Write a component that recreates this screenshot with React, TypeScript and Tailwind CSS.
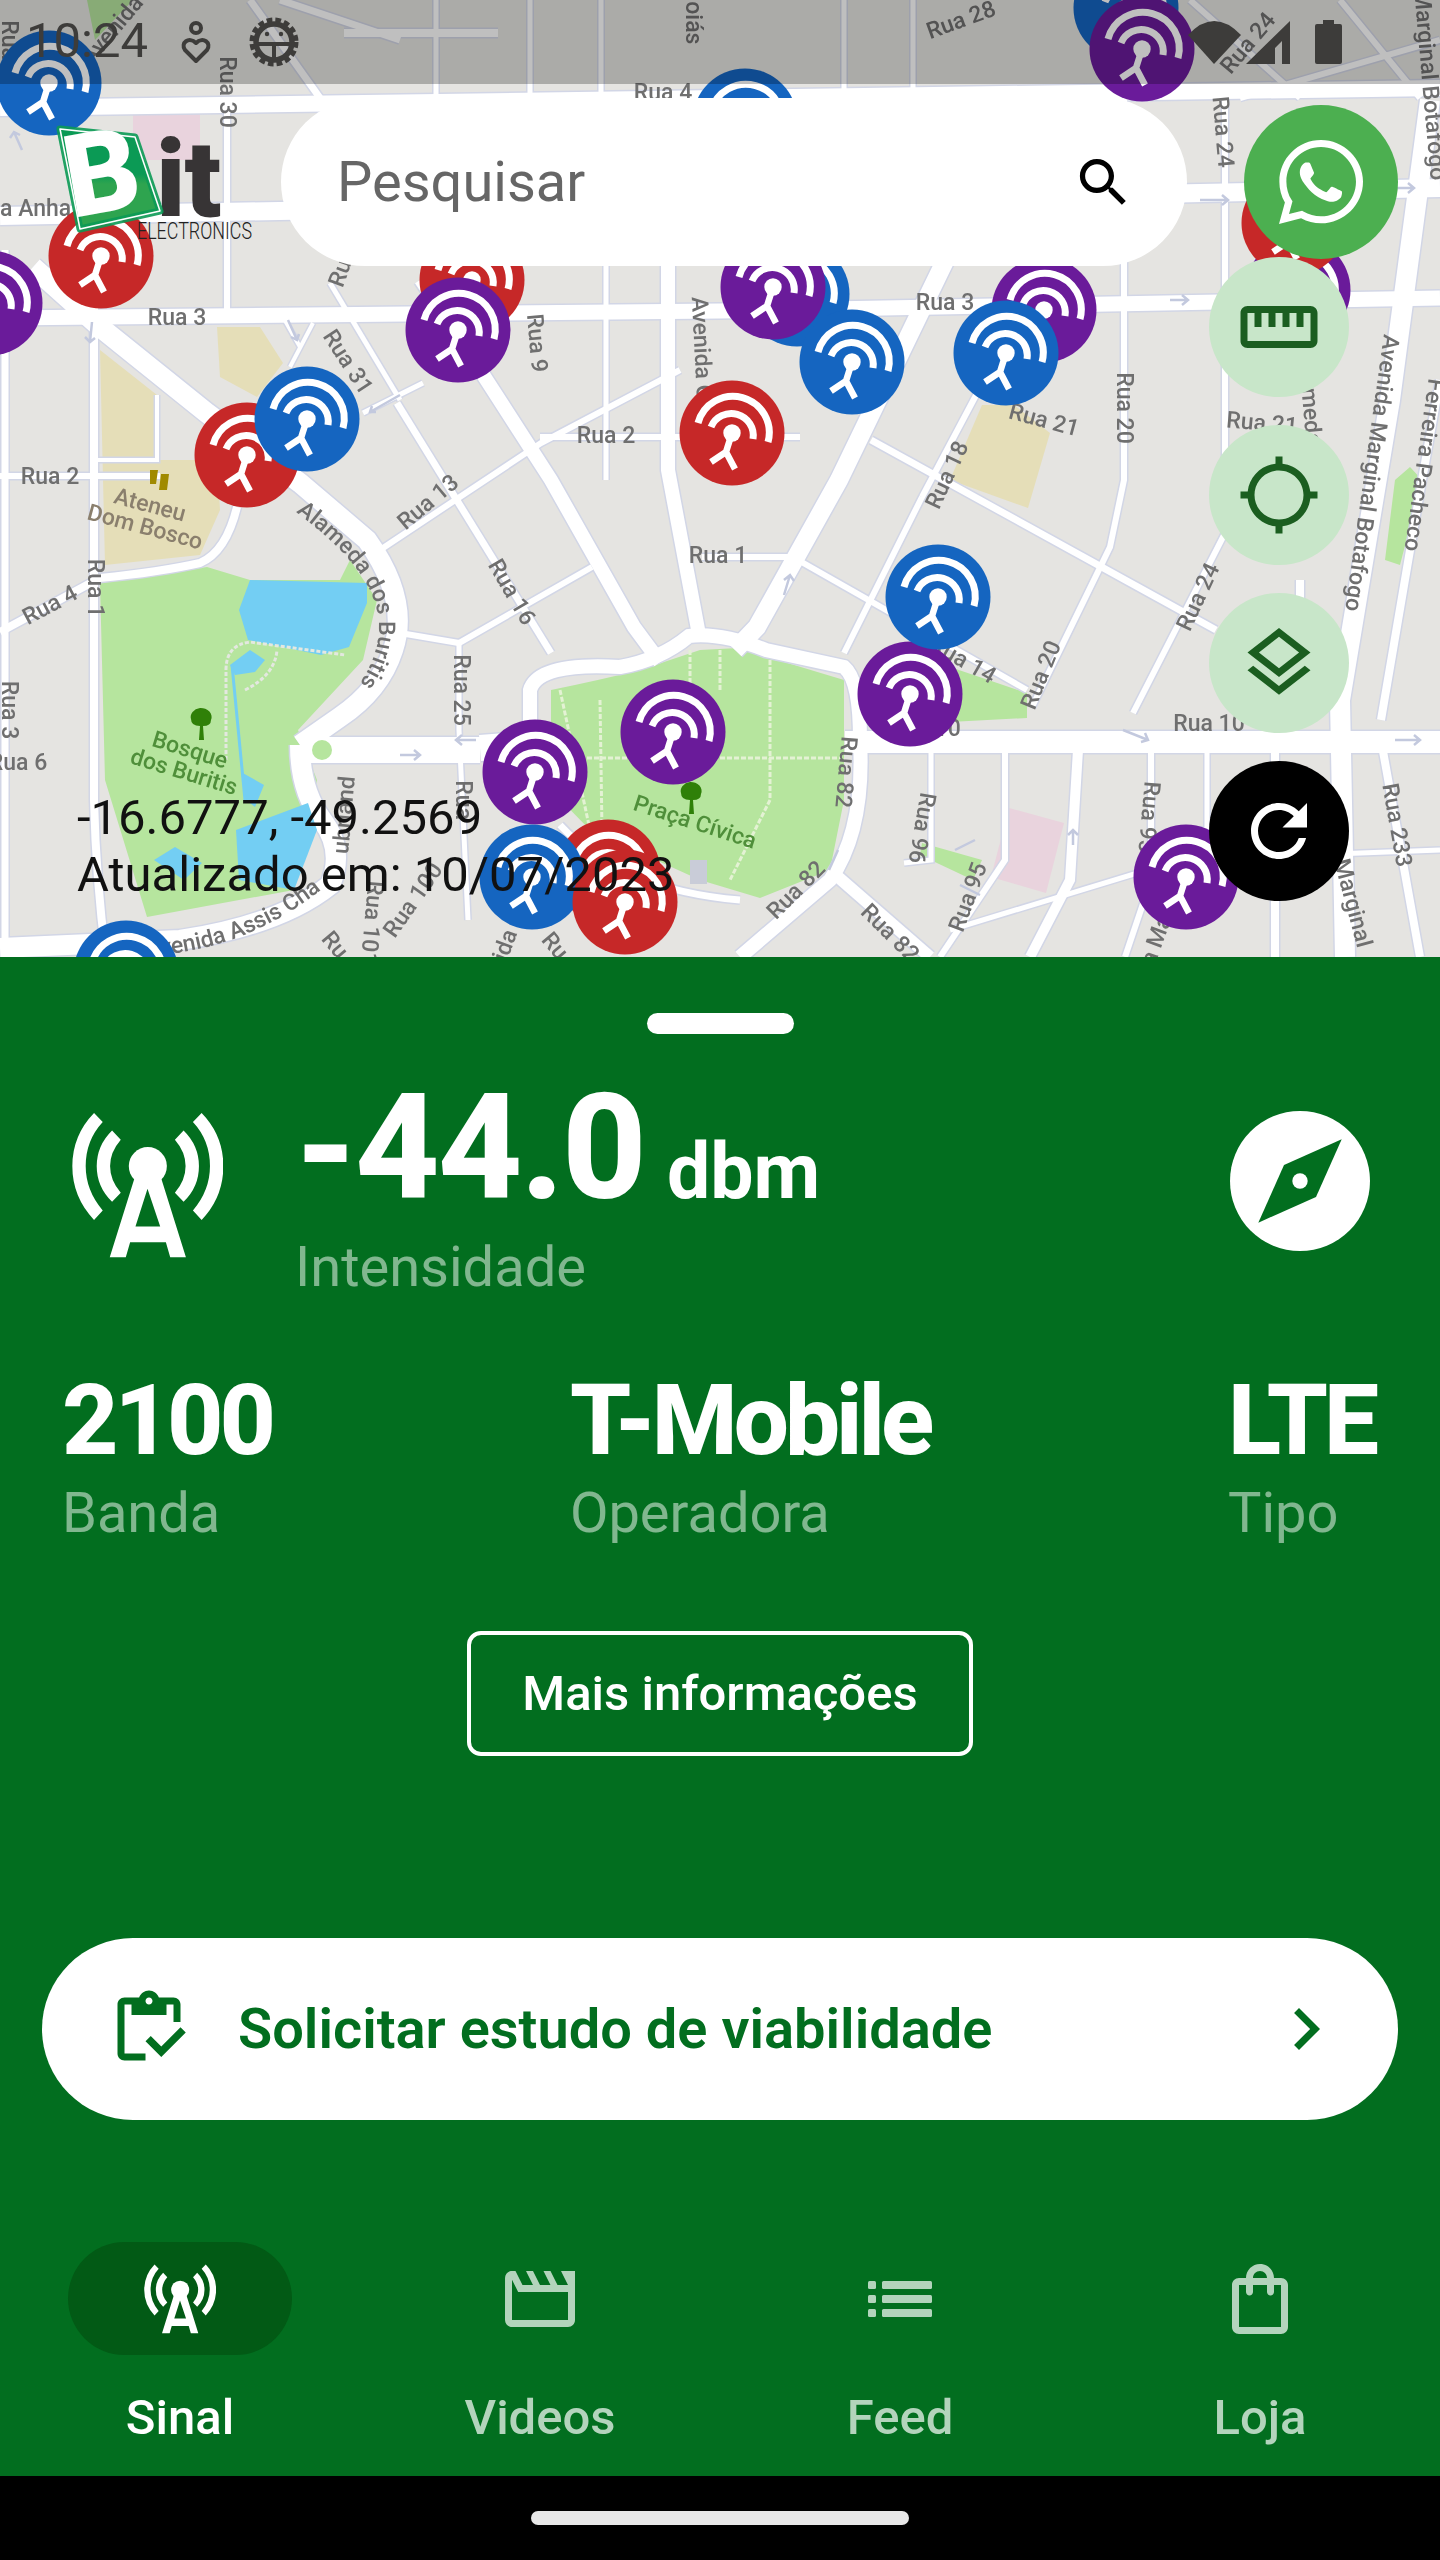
import { FaWhatsapp } from 'react-icons/fa';

type Road = [string, number];
type Label = [string, number, number, number, string?];
type Pin = [number, number, 'blue' | 'red' | 'purple'];

const ROADS: Road[] = [
  // thin streets first, so wider ones cover the joints
  ['M227 100V316', 6],
  ['M94 240V800Q96 880 106 957', 8],
  ['M5 250V957', 7],
  ['M0 632L100 578Q160 572 200 563Q226 552 237 507', 8],
  ['M397 403L551 653', 7],
  ['M380 550L541 443L680 370', 6],
  ['M400 633L459 643L592 567', 6],
  ['M459 643V730L468 920', 5],
  ['M330 283L400 400', 5],
  ['M363 413L423 383', 5],
  ['M283 317L300 347M313 323L290 367', 4],
  ['M0 476H94M540 437H800M94 476H160', 6],
  ['M157 395V460H95', 4],
  ['M606 266V480M436 266V300', 5],
  ['M702 557H800', 6],
  ['M922 497L844 653M1000 350L922 497', 6],
  ['M798 560L1027 690', 6],
  ['M871 440L1216 630', 7],
  ['M1124 100V480L1110 547L1032 707', 6],
  ['M1225 100V533L1133 713', 6],
  ['M1300 580V720M1275 750V957', 8],
  ['M931 750V860L904 863', 5],
  ['M1005 750V860L940 957', 6],
  ['M1078 750L1070 880L1030 957', 10],
  ['M1151 750V880L1125 957', 6],
  ['M1207 750V830H1180V900', 5],
  ['M1381 720L1422 480L1440 380M1381 740L1420 957', 8],
  ['M950 930L1180 860L1440 850', 5],
  // status bar area
  ['M344 33H498', 8],
  ['M436 0V98M530 0V98M601 0V98M844 0V98M913 0V98', 5],
  ['M250 0L320 98M280 0L400 40', 7],
  ['M1190 0L1300 98M1340 0L1420 98M1440 40L1240 98', 6],
  // main ones
  ['M0 108L720 98L1440 88', 16],
  ['M0 216L720 203L1440 188', 18],
  ['M0 318L720 311L1440 298', 15],
  ['M310 750H480M480 748L560 742', 26],
  ['M845 742H1440', 22],
  ['M482 373L551 480L634 627L660 662', 14],
  ['M420 280L482 373', 12],
  ['M668 266V470L700 640', 14],
  ['M960 230L839 480L757 627L735 650', 18],
  ['M1430 100L1390 400L1340 700L1345 957', 20],
  ['M33 267L100 327L207 413L300 483L367 540Q410 600 393 650Q380 690 340 717L300 745', 20],
  ['M300 745Q300 790 322 820Q345 850 330 885Q280 925 180 940L0 948', 20],
  ['M530 740V690Q538 662 620 667Q660 660 689 636Q720 632 766 650L844 667Q860 680 860 740Q865 830 830 880L740 957', 14],
  ['M830 870L930 957', 12],
  ['M560 825Q620 890 740 900', 7],
];

const GREENS = [
  'M100 583L207 567L250 580H340L350 560L377 600L363 660L298 730L317 780L294 890L147 917L105 780Z',
  'M551 690Q600 680 640 670L700 650L738 648L844 680V800L830 870L760 898L700 880L590 830L551 790Z',
  'M950 667L1027 693V718L950 722Z',
  'M922 843L982 860L973 880L920 855Z',
  'M1385 560L1400 565L1422 480L1410 467L1395 480Z',
  'M87 0H133L95 40Z',
];

const WATERS = [
  'M250 580L367 583L367 603L349 647L321 655L248 640L239 610Z',
  'M236 830L308 803L317 830L294 890L239 880Z',
  'M154 860L175 847L202 863L184 880Z',
  'M241 772L264 785L255 807L246 800Z',
  'M230 665L250 650L265 660L255 672L235 675Z',
];

const LABELS: Label[] = [
  ['Rua 3', 177, 317, 0],
  ['Rua 30', 227, 92, 90],
  ['Rua 4', 663, 92, 0],
  ['Rua Anha', 22, 208, 0],
  ['Rua 9', 537, 343, 85],
  ['Rua 31', 348, 362, 57],
  ['Ru', 340, 273, -70],
  ['Avenida Goiás', 703, 370, 87],
  ['Rua 2', 50, 476, 0],
  ['Rua 2', 606, 435, 0],
  ['Rua 13', 428, 502, -40],
  ['Rua 16', 512, 592, 60],
  ['Rua 25', 461, 690, 90],
  ['Rua 4', 50, 605, -28],
  ['Rua 1', 95, 588, 90],
  ['Rua 3', 9, 710, 90],
  ['Rua 6', 18, 762, 0],
  ['Rua 101', 372, 923, 95],
  ['Rua 100', 413, 900, -55],
  ['Rua', 463, 800, 90],
  ['ubriand', 344, 815, -85],
  ['Ru', 335, 945, 50],
  ['ida', 505, 945, -70],
  ['Ru', 555, 946, 50],
  ['Rua 28', 961, 20, -20],
  ['Rua 24', 1248, 43, -50],
  ['Rua 24', 1223, 132, 85],
  ['Rua 3', 945, 302, 0],
  ['Rua 21', 1044, 420, 15],
  ['Rua 21', 1262, 423, 5],
  ['Rua 18', 947, 475, -65],
  ['Rua 20', 1124, 408, 90],
  ['Rua 20', 1041, 675, -68],
  ['Rua 24', 1198, 597, -65],
  ['Rua 14', 963, 660, 30],
  ['Rua 1', 718, 555, 0],
  ['Rua 10', 925, 728, 0],
  ['Rua 10', 1209, 723, 0],
  ['Rua 82', 846, 772, 95],
  ['Rua 82', 796, 890, -45],
  ['Rua 82', 890, 933, 45],
  ['Rua 96', 922, 828, 100],
  ['Rua 95', 968, 897, -70],
  ['Rua 95', 1149, 817, 95],
  ['Rua 233', 1397, 825, 80],
  ['Avenida Marginal Botafogo', 1372, 473, 98],
  ['Ferreira Pacheco', 1424, 465, 98],
  ['Alameda', 1310, 400, 85],
  ['Marginal Botafogo', 1430, 85, 85],
  ['Marginal', 1353, 903, 75],
  ['a Ma', 1156, 940, -70],
  ['Avenida', 112, 30, -50],
  ['Rua', 9, 40, 90],
  ['Goiás', 693, 15, 90],
  // coloured place names
  ['Ateneu', 150, 505, 15, '#8a7f6d'],
  ['Dom Bosco', 145, 527, 15, '#8a7f6d'],
  ['Bosque', 190, 750, 17, '#4f8f3a'],
  ['dos Buritis', 184, 772, 17, '#4f8f3a'],
  ['Praça Cívica', 695, 822, 18, '#4f8f3a'],
];

const ARROWS: string[] = [
  'M22 150L14 132M10 138L14 132L20 135',
  'M92 322L90 342M85 337L90 342L95 338',
  'M288 320L297 340M291 337L297 340L299 334',
  'M400 395L370 412M376 412L370 412L372 406',
  'M1200 200H1228M1222 195L1228 200L1222 205',
  'M1170 300H1188M1182 295L1188 300L1182 305',
  'M1390 188H1414M1408 183L1414 188L1408 193',
  'M1395 740H1420M1414 735L1420 740L1414 745',
  'M1123 730L1148 740M1145 733L1148 740L1141 742',
  'M456 740H476M462 735L456 740L462 745',
  'M400 755H420M414 750L420 755L414 760',
  'M1073 845V830M1068 835L1073 830L1078 835',
  'M955 850L975 840M980 895L960 885',
  'M784 595L790 575M784 580L790 575L794 581',
  'M829 870L838 850',
];

const PINS: Pin[] = [
  [126, 973, 'blue'],
  [-10, 303, 'purple'],
  [101, 256, 'red'],
  [49, 83, 'blue'],
  [472, 280, 'red'],
  [458, 330, 'purple'],
  [247, 455, 'red'],
  [307, 419, 'blue'],
  [732, 433, 'red'],
  [745, 121, 'blue'],
  [797, 294, 'blue'],
  [773, 287, 'purple'],
  [852, 362, 'blue'],
  [1044, 310, 'purple'],
  [1006, 353, 'blue'],
  [1126, 8, 'blue'],
  [1142, 49, 'purple'],
  [1298, 290, 'purple'],
  [1294, 223, 'red'],
  [910, 694, 'purple'],
  [938, 597, 'blue'],
  [1186, 877, 'purple'],
  [673, 732, 'purple'],
  [535, 772, 'purple'],
  [608, 872, 'red'],
  [532, 877, 'blue'],
  [625, 902, 'red'],
];

const PIN_COLORS = { blue: '#1565c0', red: '#c62828', purple: '#6a1b9a' };

const RoadMap = () => (
  <svg viewBox="0 0 1440 957" className="absolute inset-0 w-full h-full blur-[0.6px]" style={{ fontFamily: 'Roboto, sans-serif' }}>
    <rect width="1440" height="957" fill="#e5e4e1" />
    <path d="M133 113H200V160H133Z" fill="#e9d3dd" />
    <path d="M1009 808L1064 823L1046 893L991 877Z" fill="#e9d3dd" />
    <path d="M100 350L157 395V460L217 460L220 510L200 555L105 565Z" fill="#e5deb8" />
    <path d="M217 327H260L283 363L257 397L220 377Z" fill="#e5deb8" />
    <path d="M982 405L1014 405L1050 433L1028 508L950 480Z" fill="#e5deb8" />
    {GREENS.map((d) => (
      <path key={d} d={d} fill="#b6e59e" />
    ))}
    {ROADS.map(([d, w]) => (
      <path key={`c${d}`} d={d} fill="none" stroke="#d2d6e6" strokeWidth={w + 3} />
    ))}
    {ROADS.map(([d, w]) => (
      <path key={d} d={d} fill="none" stroke="#ffffff" strokeWidth={w} />
    ))}
    <circle cx="322" cy="750" r="10" fill="#b6e59e" />
    {WATERS.map((d) => (
      <path key={d} d={d} fill="#73cef3" />
    ))}
    <path d="M232 665L245 800" stroke="#73cef3" strokeWidth="3" fill="none" />
    <path d="M226 760V670Q226 645 250 642L345 655M245 690Q275 675 277 650" stroke="#e4e8e0" strokeWidth="3" strokeDasharray="4 2" fill="none" />
    <path d="M600 700L602 830M560 690L590 830M770 660L770 800L730 880M690 650V700M720 650V690M552 758H840" stroke="#e4f2d4" strokeWidth="3" strokeDasharray="5 2" fill="none" />
    <rect x="690" y="860" width="17" height="24" fill="#c9ccd8" />
    {ARROWS.map((d) => (
      <path key={d} d={d} stroke="#c3c9de" strokeWidth="2.5" fill="none" />
    ))}
    {/* trees */}
    <g fill="#2f8008">
      <path d="M200 708a11 9 0 0 1 11 12q0 6-8 6l1 14h-5l1-14q-9 0-9-7a11 9 0 0 1 9-11Z" />
      <path d="M690 782a11 9 0 0 1 11 12q0 6-8 6l1 14h-5l1-14q-9 0-9-7a11 9 0 0 1 9-11Z" />
    </g>
    <path d="M150 470h8l-2 14h-6ZM161 474h8l-2 16h-8Z" fill="#a08a00" />
    {LABELS.map(([t, x, y, r, c]) => (
      <text
        key={`${t}${x}`}
        x={x}
        y={y}
        fontSize="23"
        fontWeight="500"
        fill={c ?? '#6f6f6f'}
        textAnchor="middle"
        dominantBaseline="central"
        transform={`rotate(${r} ${x} ${y})`}
      >
        {t}
      </text>
    ))}
    <path id="alameda" d="M296 512C362 562 412 618 352 694" fill="none" />
    <text fontSize="23" fontWeight="500" fill="#6f6f6f">
      <textPath href="#alameda">Alameda dos Buritis</textPath>
    </text>
    <path id="assis" d="M146 956Q262 950 348 866" fill="none" />
    <text fontSize="23" fontWeight="500" fill="#6f6f6f">
      <textPath href="#assis">Avenida Assis Cha</textPath>
    </text>
  </svg>
);

const Pins = () => (
  <svg viewBox="0 0 1440 957" className="absolute inset-0 w-full h-full">
    {PINS.map(([x, y, color]) => (
      <g key={`${x}-${y}`} transform={`translate(${x} ${y})`}>
        <circle r="52.5" fill={PIN_COLORS[color]} />
        <g fill="none" stroke="#fff" strokeWidth="7">
          <path d="M-34 -10A36 36 0 0 1 36 9" />
          <path d="M-21 -6A22 22 0 0 1 21 6" />
          <path d="M0 0L-6 19M-21 29L-6 19L3 36" strokeWidth="6.5" />
        </g>
        <circle r="8.7" fill="#fff" />
      </g>
    ))}
  </svg>
);

const Logo = () => (
  <svg viewBox="50 120 210 125" className="absolute left-[50px] top-[120px] w-[210px] h-[125px]" style={{ fontFamily: 'Roboto, sans-serif' }}>
    <defs>
      <linearGradient id="logoGreen" x1="0" y1="0" x2="0" y2="1">
        <stop offset="0.45" stopColor="#0b9a55" />
        <stop offset="0.55" stopColor="#2ea44f" />
      </linearGradient>
    </defs>
    <text x="156" y="217" fontSize="107" fontWeight="900" fill="#373435" letterSpacing="-1">
      it
    </text>
    <text x="137" y="239" fontSize="23" fontWeight="300" fill="#222" textLength="115" lengthAdjust="spacingAndGlyphs">
      ELECTRONICS
    </text>
    <path d="M60 129L135 137L160 211L80 229Z" fill="url(#logoGreen)" stroke="#fff" strokeWidth="2" strokeLinejoin="round" />
    <path d="M60 129L135 137L160 211L80 229Z" fill="none" stroke="#0b9a55" strokeWidth="7" strokeLinejoin="round" opacity="0.9" />
    <path d="M60 129L135 137L160 211L80 229Z" fill="none" stroke="#fff" strokeWidth="1.5" strokeLinejoin="round" />
    <text x="72" y="218" fontSize="115" fontWeight="900" fill="#fff" transform="rotate(-10 72 218)">
      B
    </text>
  </svg>
);

const StatusBar = () => (
  <div className="absolute inset-x-0 top-0 h-[84px] bg-black/25">
    <div className="flex items-center h-[84px] pl-[26px] pr-[98px] text-[#3d3c3a]">
      <span className="text-[49px] leading-[84px] mt-[-3px]">10:24</span>
      <svg viewBox="0 0 30 44" className="ml-[33px] w-[30px] h-[44px]" fill="none" stroke="currentColor" strokeWidth="4">
        <circle cx="15" cy="8" r="5" />
        <path d="M15 41L4 30C-1 23 8 16 15 23C22 16 31 23 26 30Z" strokeLinejoin="round" />
      </svg>
      <svg viewBox="0 0 50 50" className="ml-[38px] w-[50px] h-[50px]" fill="none" stroke="currentColor">
        <circle cx="25" cy="25" r="21.5" strokeWidth="6" strokeDasharray="5.5 3" />
        <circle cx="25" cy="25" r="18" strokeWidth="5.5" />
        <path d="M6 27H44M25 27V44" strokeWidth="4" />
        <circle cx="18" cy="17" r="2.2" fill="currentColor" stroke="none" />
        <circle cx="32" cy="17" r="2.2" fill="currentColor" stroke="none" />
      </svg>
      <div className="flex-1" />
      <svg viewBox="0 0 53 43" className="w-[53px] h-[43px]" fill="currentColor">
        <path d="M0 14Q26 -14 53 14L26 43Z" />
      </svg>
      <svg viewBox="0 0 44 43" className="ml-[5px] w-[44px] h-[43px]" fill="currentColor">
        <path d="M0 43L44 0V43H36V20L29 27V43Z" />
      </svg>
      <svg viewBox="0 0 27 44" className="ml-[25px] w-[27px] h-[44px]" fill="currentColor">
        <path d="M8 0H19V4H25Q27 4 27 6V42Q27 44 25 44H2Q0 44 0 42V6Q0 4 2 4H8Z" />
      </svg>
    </div>
  </div>
);

const MapButton = ({ d, className }: { d: string; className: string }) => (
  <button className={`w-[140px] h-[140px] rounded-full flex items-center justify-center ${className}`}>
    <svg viewBox="0 0 24 24" className="w-[84px] h-[84px]" fill="currentColor">
      <path d={d} />
    </svg>
  </button>
);

const AntennaIcon = ({ className }: { className: string }) => (
  <svg viewBox="95 65 450 440" className={className} fill="currentColor">
    <path d="M160 68L186 95Q135 150 135 227Q135 300 186 360L160 388Q95 320 95 227Q95 135 160 68ZM214 120L240 148Q208 185 208 227Q208 270 240 307L214 334Q168 290 168 227Q168 165 214 120Z" />
    <path transform="translate(642 0) scale(-1 1)" d="M160 68L186 95Q135 150 135 227Q135 300 186 360L160 388Q95 320 95 227Q95 135 160 68ZM214 120L240 148Q208 185 208 227Q208 270 240 307L214 334Q168 290 168 227Q168 165 214 120Z" />
    <circle cx="321" cy="227" r="57" />
    <path fillRule="evenodd" d="M282 260L207 500H255L268 455H375L388 500H435L360 260ZM320 295L284 408H358Z" />
  </svg>
);

const Stat = ({ value, label, className }: { value: string; label: string; className?: string }) => (
  <div className={className}>
    <div className="text-[98px] leading-[98px] font-extrabold tracking-[-4px] text-white">{value}</div>
    <div className="mt-[10px] text-[56px] leading-[66px] text-white/50">{label}</div>
  </div>
);

const NavItem = ({ label, active, children }: { label: string; active?: boolean; children: React.ReactNode }) => (
  <div className={`flex-1 flex flex-col items-center ${active ? 'text-white' : 'text-[#b3d4bc]'}`}>
    <div className={`w-[224px] h-[113px] rounded-full flex items-center justify-center ${active ? 'bg-[#025a15]' : ''}`}>
      {children}
    </div>
    <div className="mt-[34px] text-[49px] leading-[58px] font-medium">{label}</div>
  </div>
);

export default function App() {
  return (
    <div className="w-[1440px] h-[2560px] flex flex-col bg-black font-['Roboto',sans-serif] overflow-hidden">
      <div className="relative h-[957px] shrink-0 overflow-hidden">
        <RoadMap />
        <Pins />
        <StatusBar />
        <Logo />

        <div className="absolute left-[281px] top-[98px] w-[906px] h-[168px] rounded-full bg-white flex items-center pl-[56px]">
          <span className="text-[56px] text-[#666666]">Pesquisar</span>
          <svg viewBox="0 0 24 24" className="absolute left-[791px] top-[53px] w-[63px] h-[63px]" fill="#000">
            <path d="M15.5 14h-.79l-.28-.27C15.41 12.59 16 11.11 16 9.5 16 5.91 13.09 3 9.5 3S3 5.91 3 9.5 5.91 16 9.5 16c1.61 0 3.09-.59 4.23-1.57l.27.28v.79l5 4.99L20.49 19l-4.99-5zm-6 0C7.01 14 5 11.99 5 9.5S7.01 5 9.5 5 14 7.01 14 9.5 11.99 14 9.5 14z" />
          </svg>
        </div>

        <div className="absolute left-[1244px] top-[105px] w-[154px] h-[154px] rounded-full bg-[#4caf50] flex items-center justify-center text-white">
          <FaWhatsapp className="w-[84px] h-[96px]" />
        </div>

        <div className="absolute left-[1209px] top-[257px] flex flex-col gap-[28px]">
          <MapButton
            className="bg-[#c8e6c9] text-[#1b5e20]"
            d="M21 6H3c-1.1 0-2 .9-2 2v8c0 1.1.9 2 2 2h18c1.1 0 2-.9 2-2V8c0-1.1-.9-2-2-2zm0 10H3V8h2v4h2V8h2v4h2V8h2v4h2V8h2v4h2V8h2v8z"
          />
          <MapButton
            className="bg-[#c8e6c9] text-[#1b5e20]"
            d="M20.94 11c-.46-4.17-3.77-7.48-7.94-7.94V1h-2v2.06C6.83 3.52 3.52 6.83 3.06 11H1v2h2.06c.46 4.17 3.77 7.48 7.94 7.94V23h2v-2.06c4.17-.46 7.48-3.77 7.94-7.94H23v-2h-2.06zM12 19c-3.87 0-7-3.13-7-7s3.13-7 7-7 7 3.13 7 7-3.13 7-7 7z"
          />
          <MapButton
            className="bg-[#c8e6c9] text-[#1b5e20]"
            d="M11.99 18.54l-7.37-5.73L3 14.07l9 7 9-7-1.63-1.27-7.38 5.74zM12 16l7.36-5.73L21 9l-9-7-9 7 1.63 1.27L12 16zm0-11.47L17.74 9 12 13.47 6.26 9 12 4.53z"
          />
          <MapButton
            className="bg-black text-white"
            d="M17.65 6.35C16.2 4.9 14.21 4 12 4c-4.42 0-7.99 3.58-7.99 8s3.57 8 7.99 8c3.73 0 6.84-2.55 7.73-6h-2.08c-.82 2.33-3.04 4-5.65 4-3.31 0-6-2.69-6-6s2.69-6 6-6c1.66 0 3.14.69 4.22 1.78L13 11h7V4l-2.35 2.35z"
          />
        </div>

        <div className="absolute left-[77px] top-[789px] text-[49px] leading-[57px] text-[#111]">
          <div>-16.6777, -49.2569</div>
          <div>Atualizado em: 10/07/2023</div>
        </div>
      </div>

      <div className="h-[1519px] shrink-0 bg-[#026e1f] flex flex-col pt-[56px]">
        <div className="self-center w-[147px] h-[21px] rounded-full bg-white" />

        <div className="mt-[41px] flex items-start pl-[72px] pr-[70px] text-white">
          <AntennaIcon className="mt-[37px] w-[151px] h-[147px]" />
          <div className="ml-[72px] flex-1">
            <div className="flex items-baseline h-[147px]">
              <span className="text-[147px] leading-[147px] font-extrabold tracking-[-2px]">-44.0</span>
              <span className="ml-[22px] text-[77px] leading-none font-bold">dbm</span>
            </div>
            <div className="mt-[12px] text-[56px] leading-[66px] text-white/50">Intensidade</div>
          </div>
          <svg viewBox="0 0 140 140" className="mt-[36px] w-[140px] h-[140px]">
            <circle cx="70" cy="70" r="70" fill="#fff" />
            <path d="M111.7 28.3L86 86L28.3 111.7L54 54Z" fill="#026e1f" />
            <circle cx="70" cy="70" r="7.7" fill="#fff" />
          </svg>
        </div>

        <div className="mt-[72px] flex justify-between pl-[62px] pr-[65px]">
          <Stat value="2100" label="Banda" />
          <Stat value="T-Mobile" label="Operadora" />
          <Stat value="LTE" label="Tipo" />
        </div>

        <button className="mt-[85px] self-center w-[506px] h-[125px] rounded-[14px] border-[4px] border-white text-white text-[49px] font-medium">
          Mais informações
        </button>

        <button className="mt-[182px] mx-[42px] h-[182px] rounded-full bg-white flex items-center pl-[65px] pr-[50px] text-[#026e1f]">
          <svg viewBox="0 0 24 24" className="w-[84px] h-[84px]" fill="currentColor">
            <path d="M5 5h2v3h10V5h2v5h2V5c0-1.1-.9-2-2-2h-4.18C14.4 1.84 13.3 1 12 1s-2.4.84-2.82 2H5c-1.1 0-2 .9-2 2v14c0 1.1.9 2 2 2h6v-2H5V5zm7-2c.55 0 1 .45 1 1s-.45 1-1 1-1-.45-1-1 .45-1 1-1z" />
            <path d="M21 11.5 15.51 17l-3.01-3-1.5 1.5 4.51 4.5 6.99-7z" />
          </svg>
          <span className="ml-[47px] flex-1 text-left text-[56px] font-semibold">Solicitar estudo de viabilidade</span>
          <svg viewBox="0 0 24 24" className="w-[84px] h-[84px]" fill="currentColor">
            <path d="M10 6L8.59 7.41 13.17 12l-4.58 4.59L10 18l6-6z" />
          </svg>
        </button>

        <div className="mt-[122px] flex">
          <NavItem label="Sinal" active>
            <AntennaIcon className="w-[72px] h-[70px]" />
          </NavItem>
          <NavItem label="Videos">
            <svg viewBox="0 0 24 24" className="w-[84px] h-[84px]" fill="currentColor">
              <path d="M4 6.47L5.76 10H20v8H4V6.47M22 4h-4l2 4h-3l-2-4h-2l2 4h-3l-2-4H8l2 4H7L5 4H4c-1.1 0-1.99.9-1.99 2L2 18c0 1.1.9 2 2 2h16c1.1 0 2-.9 2-2V4z" />
            </svg>
          </NavItem>
          <NavItem label="Feed">
            <svg viewBox="0 0 64 36" className="w-[64px] h-[36px]" fill="currentColor">
              <rect x="0" y="0" width="8" height="8" rx="1.5" />
              <rect x="0" y="14" width="8" height="8" rx="1.5" />
              <rect x="0" y="28" width="8" height="8" rx="1.5" />
              <rect x="14" y="0" width="50" height="8" rx="1.5" />
              <rect x="14" y="14" width="50" height="8" rx="1.5" />
              <rect x="14" y="28" width="50" height="8" rx="1.5" />
            </svg>
          </NavItem>
          <NavItem label="Loja">
            <svg viewBox="0 0 24 24" className="w-[84px] h-[84px]" fill="currentColor">
              <path d="M18 6h-2c0-2.21-1.79-4-4-4S8 3.79 8 6H6c-1.1 0-2 .9-2 2v12c0 1.1.9 2 2 2h12c1.1 0 2-.9 2-2V8c0-1.1-.9-2-2-2zm-6-2c1.1 0 2 .9 2 2h-4c0-1.1.9-2 2-2zm6 16H6V8h2v2c0 .55.45 1 1 1s1-.45 1-1V8h4v2c0 .55.45 1 1 1s1-.45 1-1V8h2v12z" />
            </svg>
          </NavItem>
        </div>
      </div>

      <div className="flex-1 flex justify-center pt-[35px]">
        <div className="w-[378px] h-[14px] rounded-full bg-[#e8e8e8]" />
      </div>
    </div>
  );
}
